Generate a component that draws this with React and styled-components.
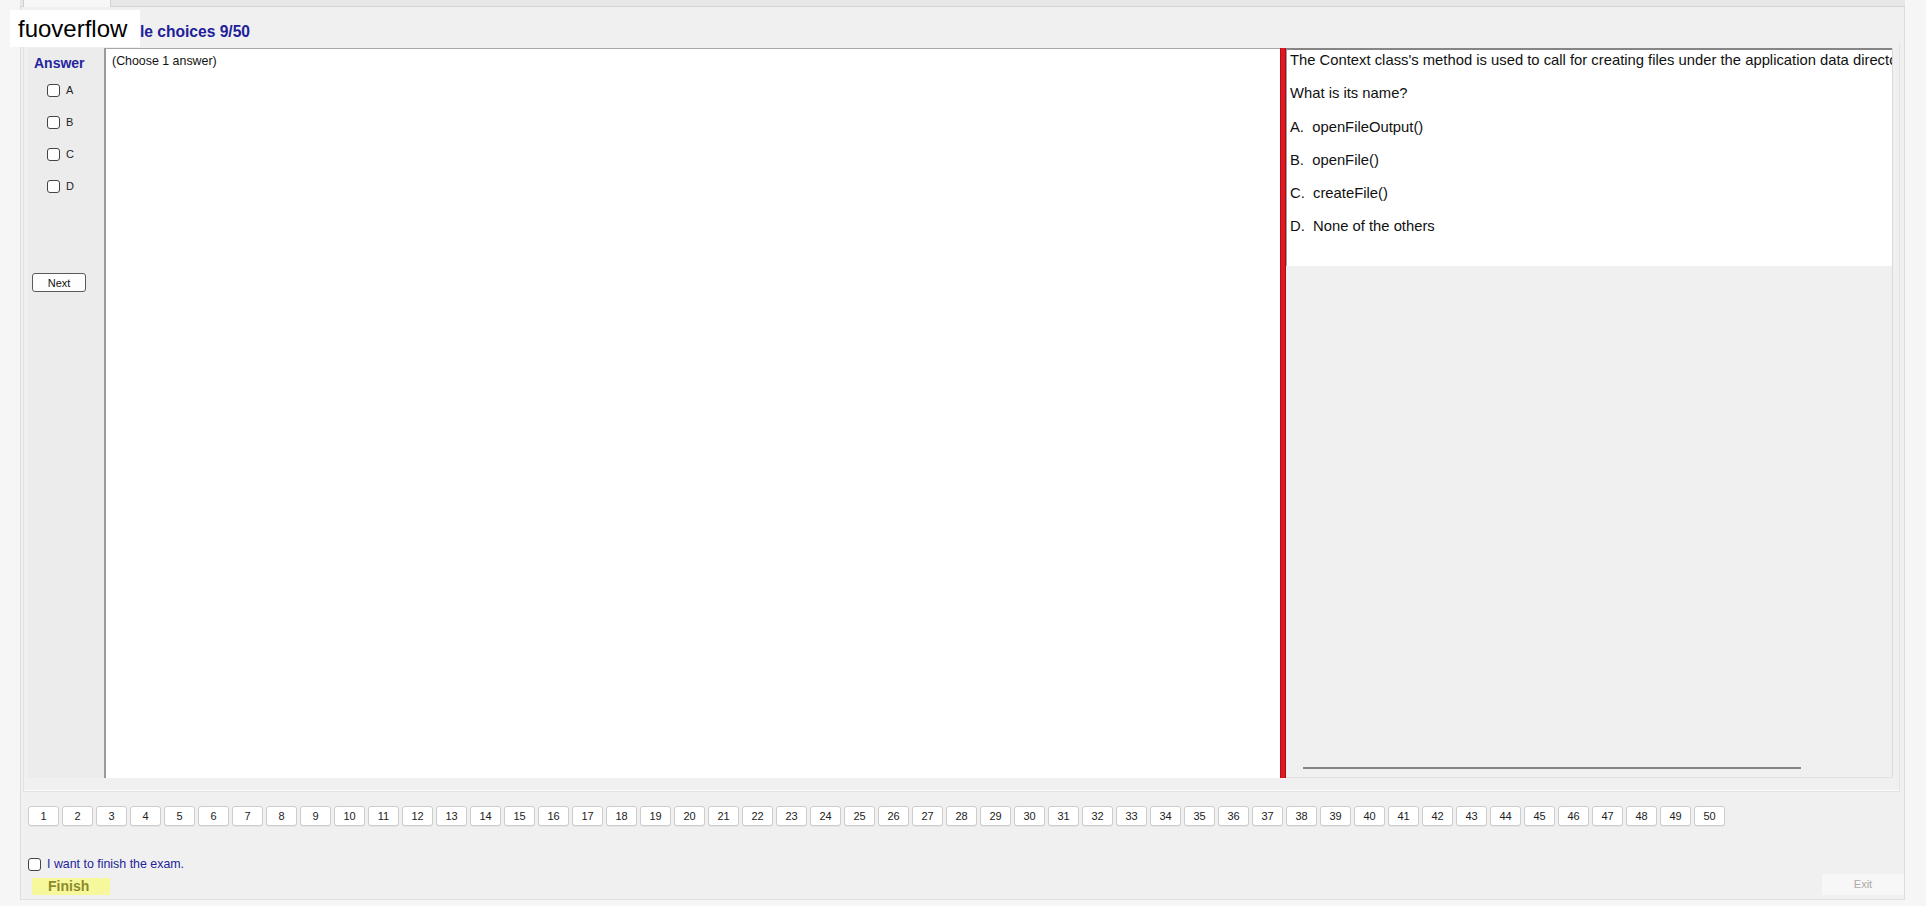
import React from 'react';
import styled, { createGlobalStyle } from 'styled-components';

const GlobalStyle = createGlobalStyle`
  html, body {
    margin: 0;
    padding: 0;
    background: #f6f6f6;
  }
  body {
    font-family: "Liberation Sans", Arial, sans-serif;
    color: #111;
  }
`;

const Page = styled.div`
  position: relative;
  width: 1926px;
  height: 906px;
  box-sizing: border-box;
  padding: 0 21px 6px 20px;
  display: flex;
  flex-direction: column;
`;

const TabStrip = styled.div`
  flex: none;
  height: 6px;
  background: #e7e7e7;
  border-bottom: 1px solid #d4d4d4;
  display: flex;
`;

const Tab = styled.div`
  margin-left: 3px;
  width: 86px;
  height: 7px;
  background: #f7f7f7;
  border: 1px solid #d0d0d0;
  border-top: none;
  border-bottom: none;
`;

const TabPanel = styled.div`
  flex: 1;
  display: flex;
  flex-direction: column;
  background: #f0f0f0;
  border: 1px solid #dedede;
  border-top: none;
`;

const TitleRow = styled.div`
  flex: none;
  height: 36px;
  box-sizing: border-box;
  padding: 16px 0 0 73px;
`;

const Title = styled.span`
  font-size: 15.6px;
  line-height: 17px;
  font-weight: bold;
  color: #20209a;
`;

const GroupBox = styled.div`
  flex: none;
  margin: 0 4px 0 2px;
  padding: 5px 6px 13px 4px;
  border: 1px solid #e3e3e3;
  border-top: none;
  box-shadow: inset 0 -1px 0 #fafafa;
`;

const MainRow = styled.div`
  height: 730px;
  display: flex;
`;

const AnswerCol = styled.div`
  width: 76px;
  flex: none;
  background: #ececed;
  display: flex;
  flex-direction: column;
`;

const AnswerLabel = styled.div`
  margin-top: 7px;
  padding-left: 6px;
  font-size: 14px;
  line-height: 16px;
  font-weight: bold;
  color: #2424a0;
`;

const OptionRow = styled.label`
  height: 32px;
  display: flex;
  align-items: center;
  gap: 6px;
  padding-left: 19px;
  font-size: 11px;
  color: #222;
  &:first-of-type {
    margin-top: 3px;
  }
`;

const Box = styled.input.attrs({ type: 'checkbox' })`
  appearance: none;
  margin: 0;
  width: 13px;
  height: 13px;
  box-sizing: border-box;
  border: 1px solid #444;
  border-radius: 3px;
  background: #fff;
  flex: none;
`;

const NextButton = styled.button`
  margin: 71px 0 0 4px;
  width: 54px;
  height: 19px;
  padding: 0;
  font-family: inherit;
  font-size: 11px;
  color: #111;
  background: #fdfdfd;
  border: 1px solid #5a5a5a;
  border-radius: 3px;
`;

const ContentArea = styled.div`
  flex: 1;
  background: #fff;
  border-left: 2px solid #9a9a9a;
  border-top: 1px solid #a8a8a8;
  padding: 5px 6px;
  font-size: 12.4px;
  line-height: 14px;
  color: #111;
`;

const Splitter = styled.div`
  flex: none;
  width: 4px;
  background: #e01822;
  border-left: 1px solid #b0101a;
  border-right: 1px solid #a00e16;
`;

const RightPane = styled.div`
  flex: none;
  width: 606px;
  display: flex;
  flex-direction: column;
  border-right: 1px solid #dadada;
  border-bottom: 1px solid #e2e2e2;
`;

const QuestionBox = styled.div`
  flex: none;
  height: 218px;
  box-sizing: border-box;
  padding: 1px 0 0 3px;
  background: #fff;
  border-top: 2px solid #858585;
  border-left: 1px solid #a0a0a0;
  overflow: hidden;
  white-space: pre;
  font-size: 14.8px;
  color: #111;
`;

const QLine = styled.p`
  margin: 0 0 15.3px;
  line-height: 18px;
`;

const Rule = styled.div`
  margin: auto 0 8px 17px;
  width: 498px;
  height: 2px;
  background: #858585;
`;

const NumberRow = styled.div`
  margin-top: 14px;
  padding-left: 7px;
  display: flex;
  gap: 3px;
`;

const NumButton = styled.button`
  width: 31px;
  height: 20px;
  padding: 0;
  font-family: inherit;
  font-size: 11px;
  color: #222;
  background: #fff;
  border: 1px solid #cdcdcd;
  border-radius: 3px;
  box-shadow: 0 1px 0 #e4e4e4;
`;

const FinishCheck = styled.label`
  margin-top: 31px;
  padding-left: 7px;
  display: flex;
  align-items: center;
  gap: 6px;
  font-size: 12.4px;
  line-height: 14px;
  color: #24249a;
`;

const BottomRow = styled.div`
  margin-top: 3px;
  display: flex;
  justify-content: space-between;
  align-items: flex-start;
`;

const FinishButton = styled.div`
  margin: 4px 0 0 11px;
  width: 78px;
  height: 17px;
  box-sizing: border-box;
  padding-left: 16px;
  background: #f7f89c;
  font-size: 14px;
  line-height: 17px;
  font-weight: bold;
  color: #8a8a2c;
`;

const ExitButton = styled.div`
  width: 82px;
  height: 21px;
  background: #f7f7f7;
  text-align: center;
  font-size: 11px;
  line-height: 21px;
  color: #ababab;
`;

const Watermark = styled.div`
  position: absolute;
  left: 10px;
  top: 10px;
  width: 130px;
  height: 37px;
  box-sizing: border-box;
  padding-left: 8px;
  background: #fff;
  font-size: 24px;
  line-height: 37px;
  color: #000;
`;

const questionLines = [
  "The Context class's method is used to call for creating files under the application data directory.",
  'What is its name?',
  'A.  openFileOutput()',
  'B.  openFile()',
  'C.  createFile()',
  'D.  None of the others',
];

const numbers = Array.from({ length: 50 }, (_, i) => i + 1);

export default function App() {
  return (
    <>
      <GlobalStyle />
      <Page>
        <TabStrip>
          <Tab />
        </TabStrip>
        <TabPanel>
          <TitleRow>
            <Title>Multiple choices 9/50</Title>
          </TitleRow>
          <GroupBox>
            <MainRow>
              <AnswerCol>
                <AnswerLabel>Answer</AnswerLabel>
                {['A', 'B', 'C', 'D'].map((letter) => (
                  <OptionRow key={letter}>
                    <Box />
                    {letter}
                  </OptionRow>
                ))}
                <NextButton>Next</NextButton>
              </AnswerCol>
              <ContentArea>(Choose 1 answer)</ContentArea>
              <Splitter />
              <RightPane>
                <QuestionBox>
                  {questionLines.map((line) => (
                    <QLine key={line}>{line}</QLine>
                  ))}
                </QuestionBox>
                <Rule />
              </RightPane>
            </MainRow>
          </GroupBox>
          <NumberRow>
            {numbers.map((n) => (
              <NumButton key={n}>{n}</NumButton>
            ))}
          </NumberRow>
          <FinishCheck>
            <Box />
            I want to finish the exam.
          </FinishCheck>
          <BottomRow>
            <FinishButton>Finish</FinishButton>
            <ExitButton>Exit</ExitButton>
          </BottomRow>
        </TabPanel>
        <Watermark>fuoverflow</Watermark>
      </Page>
    </>
  );
}
